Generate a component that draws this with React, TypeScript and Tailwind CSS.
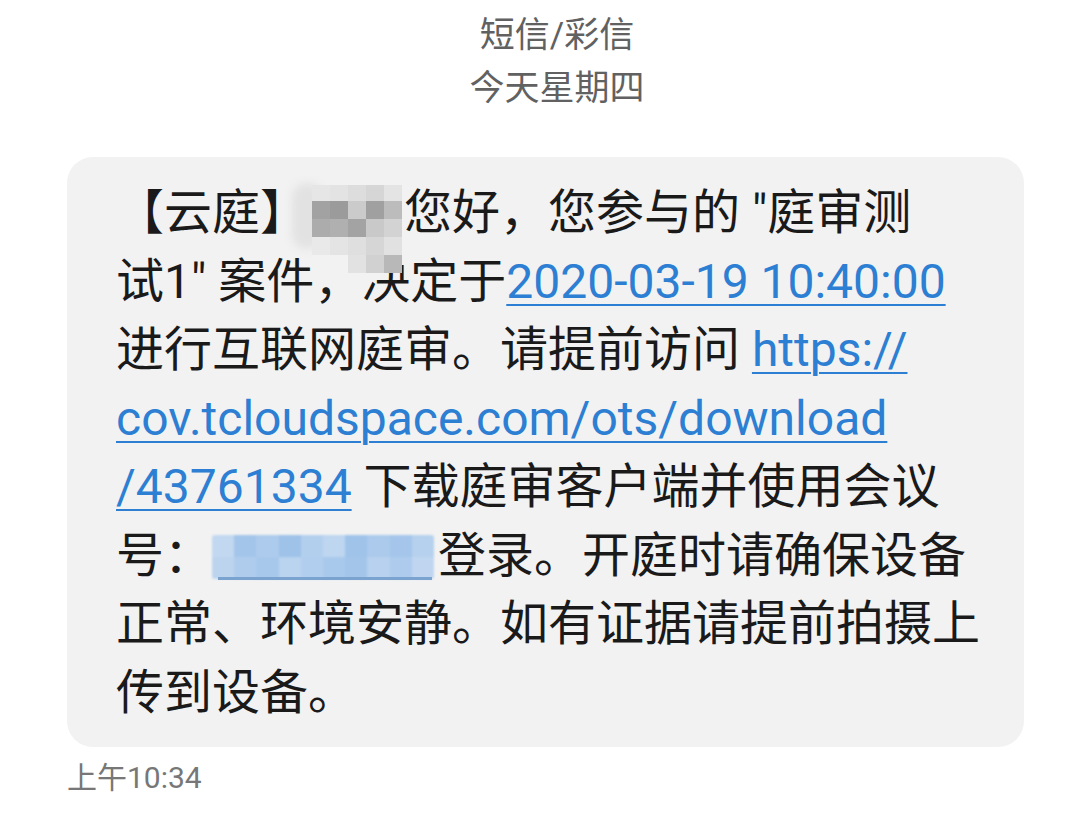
import React from "react";

const link = "text-[#2c7fd2] underline decoration-[2px] underline-offset-[6px]";

// redacted name on the first line, pixelated gray
const grayCells: { x: number; y: number; c: string }[] = [
  { x: 0, y: 0, c: "#e6e6e6" }, { x: 18, y: 0, c: "#e3e3e3" }, { x: 36, y: 0, c: "#dddddd" }, { x: 54, y: 0, c: "#d6d6d6" }, { x: 72, y: 0, c: "#e4e4e4" },
  { x: 0, y: 16, c: "#a2a2a2" }, { x: 18, y: 16, c: "#9b9b9b" }, { x: 36, y: 16, c: "#cbcbcb" }, { x: 54, y: 16, c: "#a0a0a0" }, { x: 72, y: 16, c: "#bcbcbc" },
  { x: 0, y: 34, c: "#acacac" }, { x: 18, y: 34, c: "#b0b0b0" }, { x: 36, y: 34, c: "#a3a3a3" }, { x: 54, y: 34, c: "#c9c9c9" }, { x: 72, y: 34, c: "#d3d3d3" },
  { x: 0, y: 52, c: "#e9e9e9" }, { x: 18, y: 52, c: "#e4e4e4" }, { x: 36, y: 52, c: "#dfdfdf" }, { x: 54, y: 52, c: "#d6d6d6" }, { x: 72, y: 52, c: "#e1e1e1" },
  { x: 36, y: 70, c: "#e2e2e2" }, { x: 54, y: 70, c: "#d1d1d1" }, { x: 72, y: 70, c: "#b8b8b8" },
];

const blueCells = [
  "#c2d8f0", "#a3c5ea", "#adcbec", "#9ec2e8", "#b3cfee", "#bed6f0", "#a0c3e9", "#abcaec", "#a5c6ea", "#b6d1ee",
  "#bdd4ef", "#afcced", "#a8c8eb", "#bad3ef", "#b2ceee", "#a9c9ec", "#a3c5e9", "#b7d1ee", "#aecbed", "#c0d6f0",
];

function GrayBlur() {
  return (
    <span className="relative inline-block h-[1em] w-[96px] align-[-0.12em]">
      <span className="absolute left-[-16px] top-[-4px] h-[66px] w-[30px] rounded-full bg-[#e2e2e2] blur-[4px]" />
      {grayCells.map((g, i) => (
        <span
          key={i}
          className="absolute h-[18px] w-[18px] blur-[0.6px]"
          style={{ left: 4 + g.x, top: g.y - 2, background: g.c }}
        />
      ))}
    </span>
  );
}

function BlueBlur() {
  return (
    <span className="relative inline-block h-[1em] w-[226px] align-[-0.12em]">
      <span className="absolute left-[0px] top-[6px] grid h-[44px] w-[222px] grid-cols-10 overflow-hidden rounded-[3px] blur-[1px]">
        {blueCells.map((c, i) => (
          <span key={i} style={{ background: c }} />
        ))}
      </span>
      <span className="absolute left-[6px] top-[48px] h-[3px] w-[214px] bg-[#7aa3d0] blur-[0.5px]" />
    </span>
  );
}

export default function App() {
  return (
    <div className="h-[826px] w-[1076px] overflow-hidden bg-white font-['Roboto','Noto_Sans_CJK_SC',sans-serif]">
      <div className="pl-[38px] pt-[9px] text-center text-[35px] leading-[53px] text-[#616161]">
        <div>短信/彩信</div>
        <div>今天星期四</div>
      </div>

      <div className="ml-[67px] mt-[42px] w-[957px] rounded-[26px] bg-[#f2f2f2] pb-[20px] pl-[49px] pt-[22px] text-[48px] leading-[68.5px] text-[#1a1a1a]">
        <div className="whitespace-nowrap">
          【云庭】<GrayBlur />您好，您参与的 "庭审测
        </div>
        <div className="whitespace-nowrap">
          试1" 案件，决定于<span className={link}>2020-03-19 10:40:00</span>
        </div>
        <div className="whitespace-nowrap">
          进行互联网庭审。请提前访问 <span className={link}>https://</span>
        </div>
        <div className="whitespace-nowrap">
          <span className={link}>cov.tcloudspace.com/ots/download</span>
        </div>
        <div className="whitespace-nowrap">
          <span className={link}>/43761334</span> 下载庭审客户端并使用会议
        </div>
        <div className="whitespace-nowrap">
          号：<BlueBlur />登录。开庭时请确保设备
        </div>
        <div className="whitespace-nowrap">正常、环境安静。如有证据请提前拍摄上</div>
        <div className="whitespace-nowrap">传到设备。</div>
      </div>

      <div className="ml-[67px] mt-[13px] text-[30px] leading-[36px] text-[#777777]">上午10:34</div>
    </div>
  );
}
